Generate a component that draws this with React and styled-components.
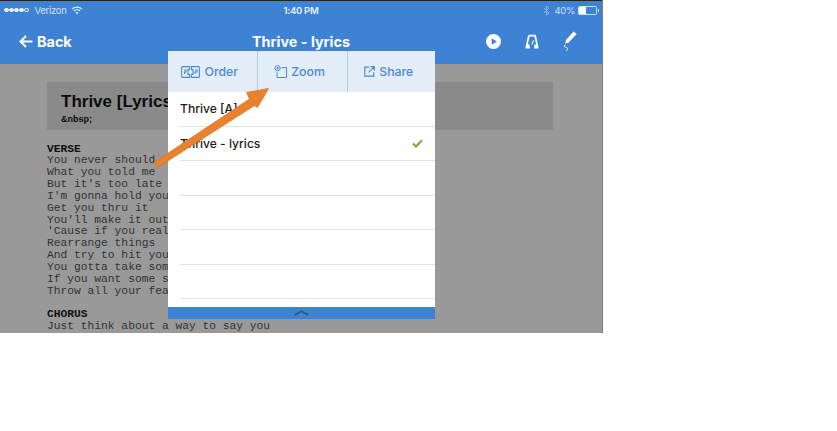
import React from "react";
import styled, { createGlobalStyle } from "styled-components";

const Global = createGlobalStyle`
  html, body { margin: 0; padding: 0; background: #fff; }
`;

const Screen = styled.div`
  position: relative;
  width: 603px;
  height: 333px;
  overflow: hidden;
  background: #999;
  border-right: 1px solid #7a7a7a;
  box-sizing: border-box;
  display: flex;
  flex-direction: column;
  font-family: Inter, "Open Sans", sans-serif;
`;

const Header = styled.header`
  background: #3e82d3;
  border-top: 1px solid #222;
  height: 64px;
  box-sizing: border-box;
  color: #fff;
  flex: none;
`;

const StatusBar = styled.div`
  height: 18px;
  display: grid;
  grid-template-columns: 1fr auto 1fr;
  align-items: center;
  padding: 0 4px;
  font-size: 9.5px;
  letter-spacing: -0.3px;
  color: #cfe0f4;
`;

const StatusSide = styled.div`
  display: flex;
  align-items: center;
  gap: ${(p) => p.$gap || 4}px;
  justify-content: ${(p) => (p.$end ? "flex-end" : "flex-start")};
`;

const Dots = styled.span`
  display: flex;
  gap: 0.5px;
  margin-right: 2px;
`;

const Dot = styled.i`
  width: 4.5px;
  height: 4.5px;
  border-radius: 50%;
  box-sizing: border-box;
  border: 0.7px solid #e4eefa;
  background: ${(p) => (p.$on ? "#e4eefa" : "transparent")};
`;

const Time = styled.span`
  font-weight: 600;
  color: #e8f0fa;
`;

const Battery = styled.span`
  width: 17px;
  height: 7px;
  border: 1px solid #cfe0f4;
  border-radius: 1.5px;
  margin-right: 1px;
  display: block;
  position: relative;
  &::before {
    content: "";
    display: block;
    width: 7px;
    height: 7px;
    background: #fff;
  }
  &::after {
    content: "";
    position: absolute;
    right: -3px;
    top: 2px;
    width: 1.5px;
    height: 3px;
    background: #cfe0f4;
  }
`;

const NavBar = styled.nav`
  height: 45px;
  display: grid;
  grid-template-columns: 1fr auto 1fr;
  align-items: center;
  padding: 0 25px;
  font-weight: 700;
  font-size: 14.4px;
`;

const BackLink = styled.div`
  display: flex;
  align-items: center;
  gap: 4px;
  margin-left: -6px;
`;

const NavIcons = styled.div`
  display: flex;
  justify-content: flex-end;
  align-items: center;
  gap: 24px;
`;

const Doc = styled.main`
  flex: 1;
  padding: 18px 49px 0 47px;
`;

const TitleBox = styled.div`
  height: 48px;
  background: #8a8a8a;
  padding: 9px 14px 0;
  box-sizing: border-box;
  font-family: "Liberation Sans", Arial, sans-serif;
  color: #0c0c0c;
`;

const DocTitle = styled.div`
  font-size: 17px;
  font-weight: 700;
  line-height: 21px;
`;

const DocSub = styled.div`
  font-size: 9px;
  font-weight: 700;
  line-height: 14px;
`;

const Lyrics = styled.div`
  margin-top: 13.5px;
  font-family: "Liberation Mono", "Courier New", monospace;
  font-size: 11.28px;
  line-height: 11.85px;
  color: #333;
  white-space: pre;
`;

const SectionHead = styled.div`
  font-weight: 700;
  color: #111;
  margin-top: ${(p) => (p.$gap ? "11.5px" : "0")};
`;

const Popover = styled.section`
  position: absolute;
  left: 168px;
  top: 51px;
  width: 267px;
  height: 268px;
  background: #fff;
  display: flex;
  flex-direction: column;
`;

const Tabs = styled.div`
  height: 41px;
  flex: none;
  background: #e3edf7;
  display: grid;
  grid-template-columns: 88.5px 90px 88.5px;
`;

const Tab = styled.div`
  display: flex;
  align-items: center;
  justify-content: center;
  gap: 4px;
  padding-right: 5px;
  color: #4a8ad6;
  font-size: 12.3px;
  font-weight: 500;
  & + & {
    border-left: 1px solid #b6c9dd;
  }
`;

const List = styled.ul`
  list-style: none;
  margin: 0;
  padding: 0 0 0 12px;
  flex: 1;
`;

const Row = styled.li`
  height: 34.5px;
  box-sizing: border-box;
  border-bottom: 1px solid #e2e2e2;
  display: flex;
  align-items: center;
  justify-content: space-between;
  padding-right: 12px;
  font-size: 12.1px;
  font-weight: 500;
  color: #1c1c1c;
`;

const Footer = styled.div`
  height: 12px;
  flex: none;
  background: #3e82d3;
  display: flex;
  align-items: center;
  justify-content: center;
`;

const ArrowLayer = styled.svg`
  position: absolute;
  left: 0;
  top: 0;
  pointer-events: none;
`;

const verse = [
  "You never should",
  "What you told me",
  "But it's too late",
  "I'm gonna hold you",
  "Get you thru it",
  "You'll make it out",
  "'Cause if you real",
  "Rearrange things",
  "And try to hit you",
  "You gotta take som",
  "If you want some s",
  "Throw all your fea",
];

const stroke = "#4a8ad6";

export default function App() {
  return (
    <>
      <Global />
      <Screen>
        <Header>
          <StatusBar>
            <StatusSide $gap={4}>
              <Dots>
                <Dot $on /><Dot $on /><Dot $on /><Dot $on /><Dot />
              </Dots>
              <span>Verizon</span>
              <svg width="12" height="9" viewBox="0 0 12 9" style={{ marginLeft: 1 }}>
                <path d="M1 3.2a7 7 0 0 1 10 0M2.8 5a4.4 4.4 0 0 1 6.4 0" fill="none" stroke="#dbe7f6" strokeWidth="1.2" />
                <path d="M6 8.6 4.4 6.6a2.4 2.4 0 0 1 3.2 0z" fill="#dbe7f6" />
              </svg>
            </StatusSide>
            <Time>1:40 PM</Time>
            <StatusSide $end $gap={3}>
              <svg width="7" height="11" viewBox="0 0 7 11" style={{ marginRight: 1 }}>
                <path d="M1 3l5 5-2.5 2.3V.7L6 3 1 8" fill="none" stroke="#8fb4e2" strokeWidth="0.9" />
              </svg>
              <span>40%</span>
              <Battery />
            </StatusSide>
          </StatusBar>
          <NavBar>
            <BackLink>
              <svg width="14" height="13" viewBox="0 0 14 13">
                <path d="M13.5 6.5H2M7 1 1.5 6.5 7 12" fill="none" stroke="#fff" strokeWidth="2" />
              </svg>
              <span>Back</span>
            </BackLink>
            <span>Thrive - lyrics</span>
            <NavIcons>
              <svg width="15" height="15" viewBox="0 0 15 15">
                <path fillRule="evenodd" d="M7.5 0a7.5 7.5 0 1 1 0 15 7.5 7.5 0 0 1 0-15zM5.7 4.2v6.6l5.2-3.3z" fill="#fff" />
              </svg>
              <svg width="14" height="15" viewBox="0 0 14 15">
                <path d="M3.9 1.6h6.2L12.4 12.4" fill="none" stroke="#fff" strokeWidth="1.8" />
                <path d="M3.9 1.6 1.6 12.4" fill="none" stroke="#fff" strokeWidth="1.8" />
                <path d="M.4 14.4 1 10.5h3.6L5 14.4zM9 14.4 9.4 10.5H13l.6 3.9z" fill="#fff" />
                <path d="M7 10.5 8.5 6.5" stroke="#fff" strokeWidth="1.2" />
              </svg>
              <svg width="14" height="21" viewBox="0 0 14 21">
                <path d="M10.6.6 13.6 3 5.6 11.6 2.2 12.8 3 9z" fill="#fff" />
                <path d="M2.4 13.4 1.2 15c-.6 1 2.9 1 3.4 2.3.3 1-.8 1.3-1 2.7" fill="none" stroke="#fff" strokeWidth="0.9" />
              </svg>
            </NavIcons>
          </NavBar>
        </Header>
        <Doc>
          <TitleBox>
            <DocTitle>Thrive [Lyrics]</DocTitle>
            <DocSub>&amp;nbsp;</DocSub>
          </TitleBox>
          <Lyrics>
            <SectionHead>VERSE</SectionHead>
            {verse.map((l) => (
              <div key={l}>{l}</div>
            ))}
            <SectionHead $gap>CHORUS</SectionHead>
            <div>Just think about a way to say you</div>
          </Lyrics>
        </Doc>
        <Popover>
          <Tabs>
            <Tab>
              <svg width="19" height="12" viewBox="0 0 19 12" fill="none" stroke={stroke} strokeWidth="1.1">
                <path d="M8.5.6H1.6a1 1 0 0 0-1 1v8.8a1 1 0 0 0 1 1H8.5V8.4H7V3.6H8.5zM10.5.6h6.9a1 1 0 0 1 1 1v8.8a1 1 0 0 1-1 1H10.5V8.4H12V3.6H10.5z" />
                <path d="M3 4h2v2H3.5v2M14 4h2v2h-2v2" />
              </svg>
              <span>Order</span>
            </Tab>
            <Tab>
              <svg width="13" height="13" viewBox="0 0 13 13" fill="none" stroke={stroke} strokeWidth="1">
                <circle cx="3.6" cy="3.2" r="2.6" />
                <path d="M2.4 3.2h2.4M3.6 2v2.4M7.5 2.6h5v9.9H3V7.2" />
              </svg>
              <span>Zoom</span>
            </Tab>
            <Tab>
              <svg width="11" height="11" viewBox="0 0 11 11" fill="none" stroke={stroke} strokeWidth="1.2">
                <path d="M5 1.2H.8v9h9V6.2M6.4.7h3.9v3.9M10.2.8 4.6 6.4" />
              </svg>
              <span>Share</span>
            </Tab>
          </Tabs>
          <List>
            <Row>Thrive [A]</Row>
            <Row>
              Thrive - lyrics
              <svg width="11" height="9" viewBox="0 0 11 9">
                <path d="M1 4.5 4 7.5 10 1.2" fill="none" stroke="#6cb33f" strokeWidth="2.2" />
              </svg>
            </Row>
            <Row />
            <Row />
            <Row />
            <Row />
          </List>
          <Footer>
            <svg width="15" height="6" viewBox="0 0 15 6">
              <path d="M.7 5 7.5 1.4 14.3 5" fill="none" stroke="#27518a" strokeWidth="1.6" />
            </svg>
          </Footer>
        </Popover>
        <ArrowLayer width="603" height="333" viewBox="0 0 603 333">
          <path d="M154 162.5 L249.5 99 L246.5 92.5 L268.5 88.5 L257.5 107.5 L254.5 105.5 L157.5 167.5 Z" fill="#e9812e" stroke="#d9762a" strokeWidth="0.8" strokeLinejoin="round" />
        </ArrowLayer>
      </Screen>
    </>
  );
}
